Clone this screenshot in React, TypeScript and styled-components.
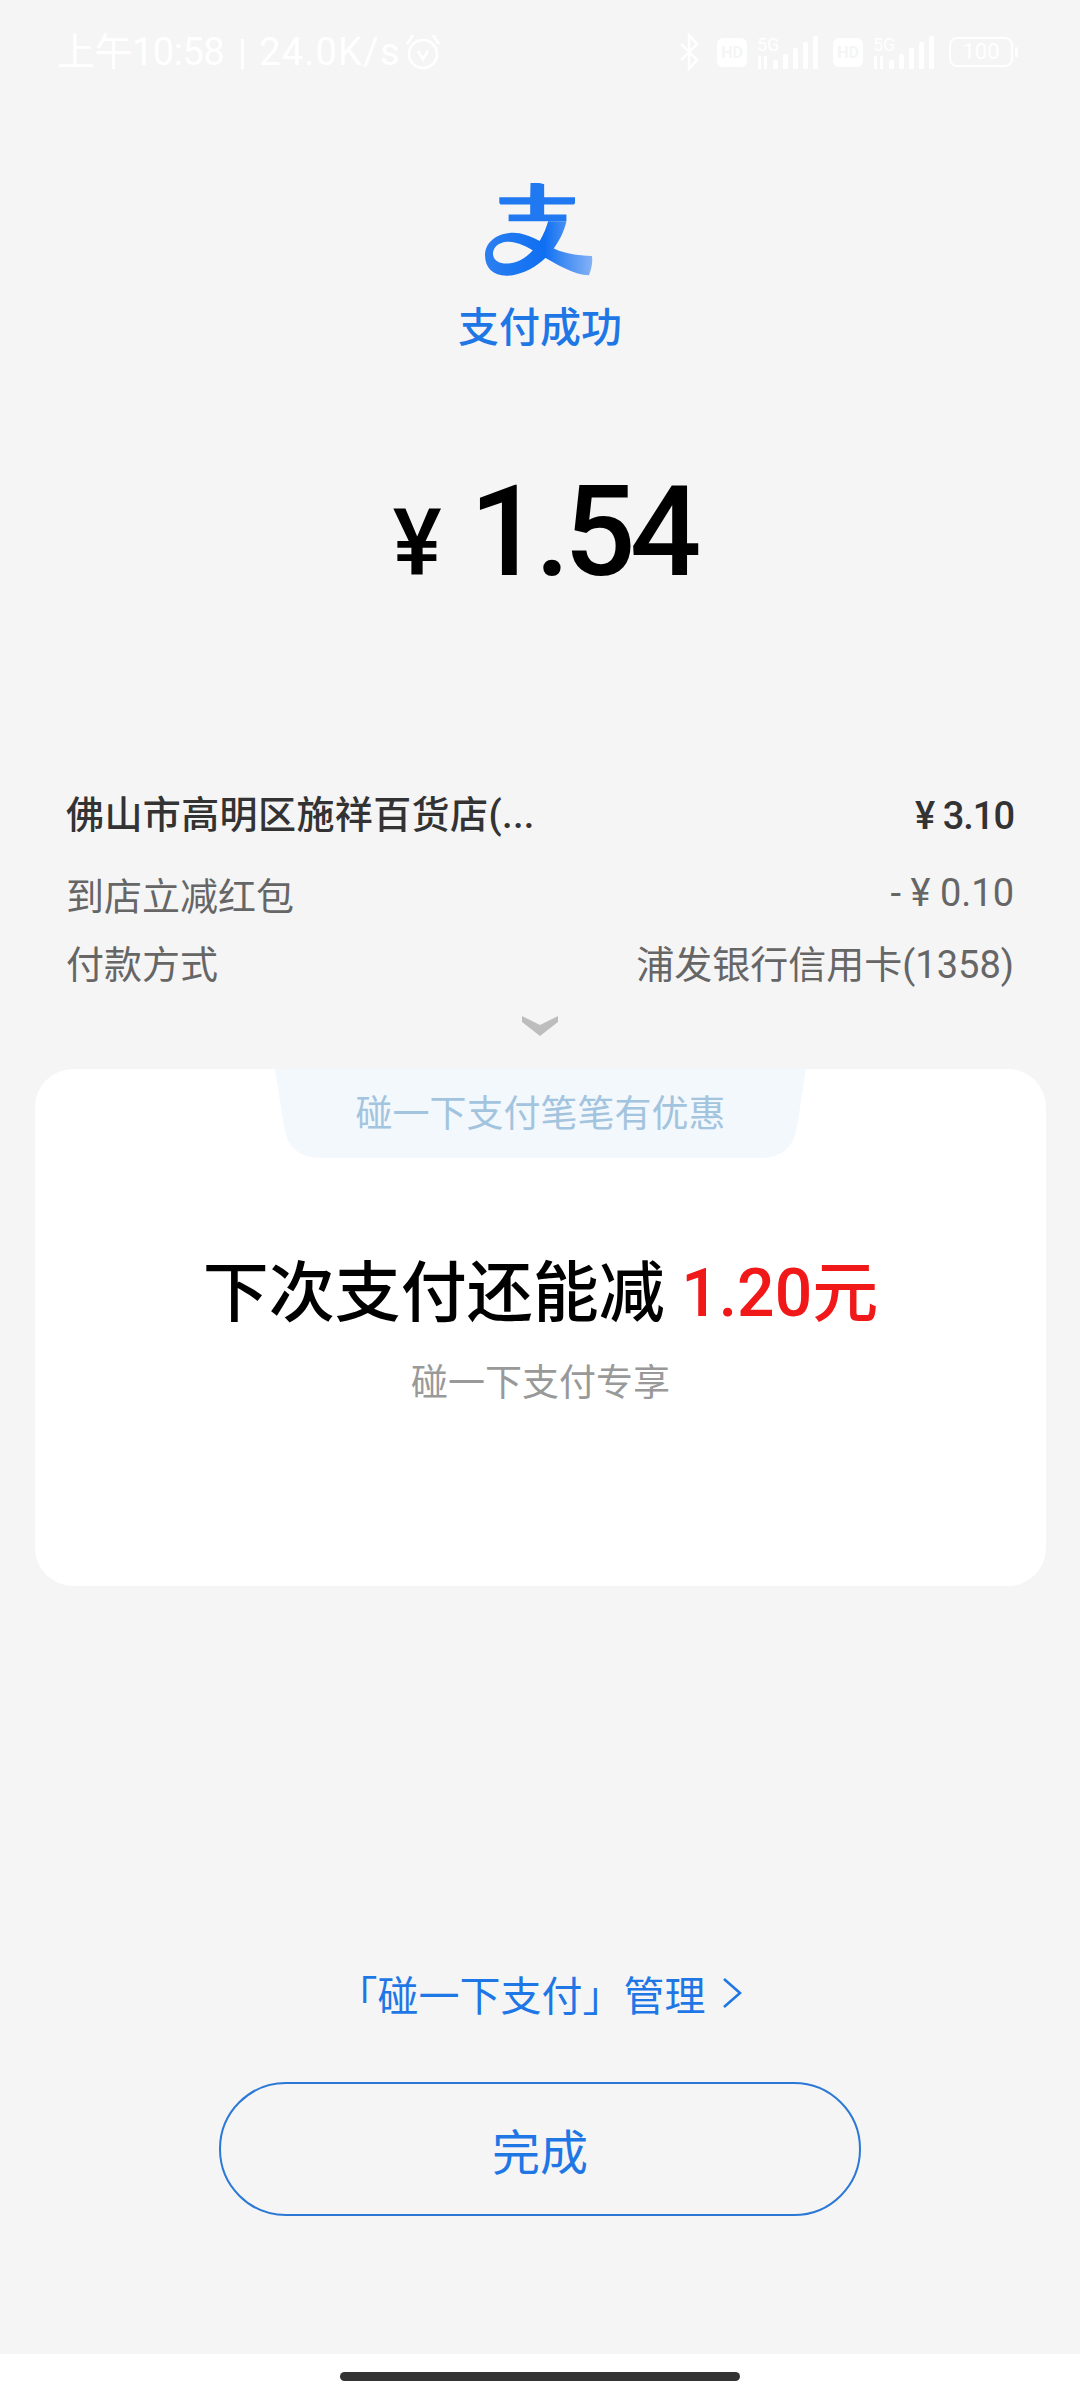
import React from "react"
import styled, { createGlobalStyle } from "styled-components"

const GlobalStyle = createGlobalStyle`
  html, body {
    margin: 0;
    padding: 0;
    background: #f5f5f5;
  }
  * {
    box-sizing: border-box;
  }
`

const SANS = `Roboto, "Noto Sans CJK SC", sans-serif`
const BLUE = "#1f77e6"

const AlipayLogo = () => (
  <LogoSvg viewBox="435 100 325 280">
    <defs>
      <linearGradient id="ribbon" x1="435" y1="0" x2="760" y2="0" gradientUnits="userSpaceOnUse">
        <stop offset="0" stopColor="#2b7ff0" />
        <stop offset="0.55" stopColor="#0f6ff2" />
        <stop offset="0.72" stopColor="#3f8bf3" />
        <stop offset="1" stopColor="#86b3f6" />
      </linearGradient>
    </defs>
    <path fill="#2079f0" d="M572 100 C585 98 600 99 613 104 V143 H706 V158 Q706 165 698 165 H613 V195 H680 V215 H506 V195 H571 V165 H486 Q478 165 478 158 V143 H571 Z" />
    <path fill="url(#ribbon)" d="M625 215 H680 C670 265 620 355 525 376 C470 388 435 362 435 318 C435 275 475 250 520 250 C570 250 620 290 660 305 C690 315 720 318 757 320 C760 340 755 360 748 378 C700 375 650 345 600 315 C560 290 530 275 500 277 C470 280 455 300 460 320 C465 340 490 347 520 340 C570 330 610 270 625 215 Z" />
  </LogoSvg>
)

const AlarmIcon = () => (
  <svg width="36" height="38" viewBox="0 0 36 38" fill="none" stroke="#fff" strokeWidth="2.6">
    <circle cx="18" cy="21" r="14" />
    <path d="M13 18 L18 26 L23 18" />
    <path d="M2 11 L8 2 M34 11 L28 2" />
  </svg>
)

const BluetoothIcon = () => (
  <BluetoothSvg width="20" height="38" viewBox="0 0 20 38" fill="none" stroke="#fff" strokeWidth="2.4">
    <path d="M2 11 L18 27 L10 36 V2 L18 11 L2 27" />
  </BluetoothSvg>
)

const SignalIcon = () => (
  <svg width="64" height="38" viewBox="0 0 64 38" fill="#fff">
    <text x="0" y="18" fontFamily="Roboto" fontSize="18" fill="#fff">5G</text>
    <rect x="1" y="23" width="3" height="13" />
    <rect x="7" y="23" width="3" height="13" />
    {[0, 1, 2, 3, 4].map(i => {
      const h = 9 + i * 6
      return <rect key={i} x={16 + i * 10} y={36 - h} width="5" height={h} rx="1.5" />
    })}
  </svg>
)

const BatteryIcon = () => (
  <Battery>
    <BatteryBody>100</BatteryBody>
    <BatteryCap />
  </Battery>
)

const App = () => (
  <Page>
    <GlobalStyle />
    <StatusBar>
      <StatusText>上午10:58</StatusText>
      <StatusDivider />
      <NetSpeed>24.0K/s</NetSpeed>
      <AlarmIcon />
      <StatusRight>
        <BluetoothIcon />
        <NetGroup>
          <Hd>HD</Hd>
          <SignalIcon />
        </NetGroup>
        <NetGroup>
          <Hd>HD</Hd>
          <SignalIcon />
        </NetGroup>
        <BatteryIcon />
      </StatusRight>
    </StatusBar>

    <Header>
      <AlipayLogo />
      <Title>支付成功</Title>
      <Amount>
        <Currency>¥</Currency>
        <Value>1.54</Value>
      </Amount>
    </Header>

    <Details>
      <MainRow>
        <MainName>佛山市高明区施祥百货店(...</MainName>
        <MainPrice>¥ 3.10</MainPrice>
      </MainRow>
      <Row>
        <span>到店立减红包</span>
        <span>- ¥ 0.10</span>
      </Row>
      <Row>
        <span>付款方式</span>
        <span>浦发银行信用卡(1358)</span>
      </Row>
    </Details>

    <More>
      <svg width="38" height="20" viewBox="0 0 38 20">
        <path d="M1 0 L19 9 L37 0 L37 6 L19 20 L1 6 Z" fill="#bdbdbd" />
      </svg>
    </More>

    <Card>
      <Tab>碰一下支付笔笔有优惠</Tab>
      <Offer>
        下次支付还能减 <OfferValue>1.20元</OfferValue>
      </Offer>
      <OfferNote>碰一下支付专享</OfferNote>
    </Card>

    <ManageLink>
      「碰一下支付」管理
      <svg width="24" height="34" viewBox="0 0 24 34" fill="none" stroke={BLUE} strokeWidth="2.6">
        <path d="M4 3 L20 17 L4 31" />
      </svg>
    </ManageLink>

    <DoneButton>完成</DoneButton>

    <NavBar>
      <HomeBar />
    </NavBar>
  </Page>
)

const Page = styled.div`
  width: 1080px;
  height: 2400px;
  display: flex;
  flex-direction: column;
  background: #f5f5f5;
  font-family: ${SANS};
  overflow: hidden;
`

const StatusBar = styled.div`
  height: 104px;
  display: flex;
  align-items: center;
  padding: 0 62px 0 57px;
  color: #fff;
`

const StatusText = styled.span`
  font-size: 38px;
  line-height: 44px;
  letter-spacing: -0.5px;
`

const StatusDivider = styled.span`
  width: 3px;
  height: 30px;
  margin: 4px 15px 0 17px;
  background: #fff;
`

const NetSpeed = styled.span`
  font-size: 38px;
  line-height: 44px;
  letter-spacing: 1.2px;
  margin-right: 4px;
`

const StatusRight = styled.div`
  margin-left: auto;
  display: flex;
  align-items: center;
  gap: 12px;
`

const BluetoothSvg = styled.svg`
  margin-right: 6px;
`

const NetGroup = styled.div`
  display: flex;
  align-items: center;
  gap: 10px;
`

const Hd = styled.span`
  width: 30px;
  height: 29px;
  border-radius: 6px;
  background: #fff;
  color: #f5f5f5;
  font-size: 16px;
  font-weight: 700;
  line-height: 29px;
  text-align: center;
`

const Battery = styled.div`
  display: flex;
  align-items: center;
  gap: 2px;
`

const BatteryBody = styled.div`
  width: 64px;
  height: 30px;
  border: 2px solid #fff;
  border-radius: 8px;
  font-size: 22px;
  line-height: 26px;
  text-align: center;
  color: #fff;
`

const BatteryCap = styled.div`
  width: 3px;
  height: 10px;
  border-radius: 2px;
  background: #fff;
`

const Header = styled.div`
  display: flex;
  flex-direction: column;
  align-items: center;
`

const LogoSvg = styled.svg`
  width: 108px;
  height: 93px;
  margin-top: 79px;
  margin-left: -2px;
`

const Title = styled.div`
  margin-top: 24px;
  font-size: 41px;
  line-height: 56px;
  font-weight: 500;
  color: ${BLUE};
`

const Amount = styled.div`
  margin: 101px 0 0 8px;
  display: flex;
  align-items: baseline;
  gap: 28px;
  height: 150px;
  color: #000;
`

const Currency = styled.span`
  font-size: 92px;
  line-height: 150px;
  font-weight: 500;
`

const Value = styled.span`
  font-size: 126px;
  line-height: 150px;
  font-weight: 500;
  letter-spacing: -6px;
`

const Details = styled.div`
  margin-top: 166px;
  padding: 0 66px;
  display: flex;
  flex-direction: column;
`

const Row = styled.div`
  display: flex;
  justify-content: space-between;
  align-items: center;
  height: 68px;
  font-size: 38px;
  color: #666;
`

const MainRow = styled(Row)`
  height: 76px;
  margin-bottom: 10px;
  color: #333;
  font-weight: 500;
`

const MainName = styled.span`
  font-size: 38px;
  letter-spacing: 0.4px;
`

const MainPrice = styled.span`
  margin-top: 9px;
  font-size: 38px;
  letter-spacing: -1px;
`

const More = styled.div`
  margin-top: 21px;
  height: 20px;
  display: flex;
  justify-content: center;
`

const Card = styled.div`
  margin: 33px 34px 0 35px;
  height: 517px;
  border-radius: 38px;
  background: #fff;
  display: flex;
  flex-direction: column;
  align-items: center;
`

const Tab = styled.div`
  width: 531px;
  height: 89px;
  background: #f3f8fd;
  clip-path: path("M0 0 H531 L522 58 Q517 89 486 89 H45 Q14 89 9 58 Z");
  font-size: 37px;
  line-height: 92px;
  text-align: center;
  color: #a3c4de;
`

const Offer = styled.div`
  margin-top: 96px;
  font-size: 66px;
  line-height: 80px;
  font-weight: 500;
  color: #000;
`

const OfferValue = styled.span`
  color: #f01818;
`

const OfferNote = styled.div`
  margin-top: 25px;
  font-size: 37px;
  line-height: 50px;
  color: #999;
`

const ManageLink = styled.div`
  margin-top: 377px;
  height: 60px;
  display: flex;
  justify-content: center;
  align-items: center;
  gap: 14px;
  font-size: 41px;
  color: ${BLUE};
`

const DoneButton = styled.button`
  margin: 59px auto 0;
  width: 642px;
  height: 134px;
  border: 2px solid #2b78d6;
  border-radius: 67px;
  background: transparent;
  font-family: ${SANS};
  font-size: 48px;
  color: ${BLUE};
`

const NavBar = styled.div`
  margin-top: auto;
  height: 46px;
  background: #fff;
  display: flex;
  justify-content: center;
  padding-top: 18px;
`

const HomeBar = styled.div`
  width: 400px;
  height: 9px;
  border-radius: 5px;
  background: #333;
`

export default App
